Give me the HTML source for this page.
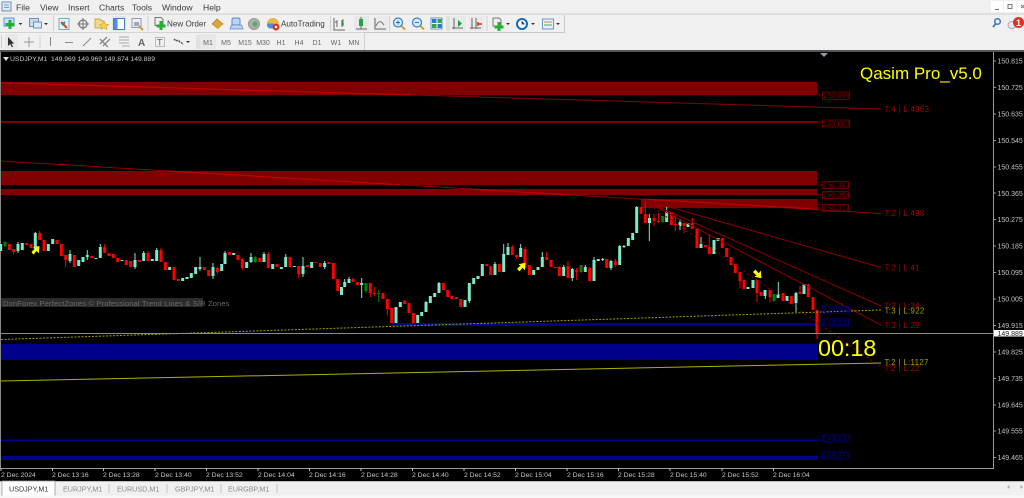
<!DOCTYPE html>
<html><head><meta charset="utf-8"><style>
html,body{margin:0;padding:0;background:#f0f0f0;width:1024px;height:498px;overflow:hidden}
svg{display:block}
text{font-family:"Liberation Sans",sans-serif;white-space:pre}
.m{font-size:8.6px;fill:#3a3a3a}
.tb{font-size:8.1px;fill:#3c3c3c}
.tf{font-size:7px;fill:#666;text-anchor:middle}
.ax{font-size:7px;fill:#c4c4c4}
.tm{font-size:6.8px;fill:#c4c4c4}
.tab{font-size:7.2px;fill:#888}
.lb{font-size:7.2px;fill:#800000;letter-spacing:.15px}
.lr{font-size:7.8px;fill:#a80000;letter-spacing:.35px}
.ly{font-size:7.8px;fill:#a0a000;letter-spacing:.35px}
.lbb{font-size:7.2px;fill:#000080;letter-spacing:.15px}
</style></head><body>
<svg width="1024" height="498" viewBox="0 0 1024 498" xmlns="http://www.w3.org/2000/svg">
<rect width="1024" height="498" fill="#f0f0f0"/>
<!-- menu -->
<rect x="2" y="2" width="9" height="9" fill="#dfe8f4" stroke="#6a8fc0"/>
<path d="M4 5h5M4 7.5h5" stroke="#7a9ac8"/>
<text class="m" x="16" y="10.5">File</text>
<text class="m" x="40" y="10.5">View</text>
<text class="m" x="68" y="10.5">Insert</text>
<text class="m" x="99" y="10.5">Charts</text>
<text class="m" x="132" y="10.5">Tools</text>
<text class="m" x="162" y="10.5">Window</text>
<text class="m" x="203" y="10.5">Help</text>
<rect x="0" y="13.5" width="1024" height="1.2" fill="#d4d4d4"/>
<rect x="991" y="1" width="12" height="11" fill="#fff"/><rect x="1004" y="1" width="12" height="11" fill="#fff"/><rect x="1017" y="1" width="7" height="11" fill="#fff"/>
<path d="M995 9.5h4" stroke="#777"/><rect x="1008" y="4.5" width="4" height="4" fill="none" stroke="#777"/><path d="M1021 5l3 3m0-3l-3 3" stroke="#777"/>
<!-- toolbar borders -->
<path d="M0 32.5H564.5V15" stroke="#c8c8c8" fill="none"/>
<rect x="0" y="32" width="364" height="1" fill="#d4d4d4"/>
<rect x="364" y="33" width="1" height="17" fill="#d0d0d0"/>
<!-- row 1 icons -->
<rect x="4" y="18" width="10" height="8" fill="#cfe0f5" stroke="#5a90d8"/>
<path d="M10 20v9M5.500 24.500h9" stroke="#22b030" stroke-width="3"/>
<path d="M18.500 23h4l-2 2z" fill="#333"/>
<rect x="29.500" y="18.500" width="9" height="8" fill="#c9d9ee" stroke="#6a90c0"/>
<rect x="33.500" y="22" width="8" height="6" fill="#dde8f5" stroke="#6a90c0"/>
<path d="M44 23h4l-2 2z" fill="#333"/>
<path d="M53.500 16v15M148 16v15M330.500 16v15M389.500 16v15M447 16v15M449 16v15M487 16v15" stroke="#d0d0d0"/>
<rect x="59" y="18.500" width="10" height="11" fill="#e8f2fa" stroke="#7ab"/><path d="M61 22l6 6" stroke="#e04030" stroke-width="2"/><path d="M62 25l3-3" stroke="#20a050" stroke-width="2"/>
<circle cx="83" cy="24" r="4" fill="none" stroke="#777" stroke-width="1.300"/><path d="M83 18v12M77 24h12" stroke="#777"/>
<path d="M95 19h5l2 2h2v7H95z" fill="#f0d890" stroke="#c8a850"/><path d="M104 21l1.500 3 3 .5-2.200 2 .6 3-2.900-1.500-2.900 1.500.6-3-2.200-2 3-.5z" fill="#f4d24a" stroke="#c8a030" stroke-width=".6"/>
<rect x="112" y="16" width="14" height="15" fill="#e4e4e4"/>
<rect x="113.500" y="18.500" width="11" height="11" fill="#fff" stroke="#4a80c0"/><rect x="114" y="19" width="3.500" height="10" fill="#4a90d8"/>
<rect x="132" y="18.500" width="9" height="9" fill="#eef" stroke="#99a"/><path d="M134 22h5v4h-5z" fill="#9ab"/><path d="M139 26l4 4" stroke="#c8a030" stroke-width="2"/>
<path d="M155 17.500h6l2 2v6h-8z" fill="#eee" stroke="#777"/>
<path d="M161 21v9M156.500 26h9" stroke="#22b030" stroke-width="3"/>
<text class="tb" x="167" y="26.500">New Order</text>
<path d="M212 24l5-5 6 5-5 4z" fill="#d9a93a" stroke="#a87a20" stroke-width=".7"/><path d="M214 26l4 3 4-4" stroke="#e8c870" fill="none"/>
<rect x="232" y="18" width="8" height="7" rx="1.500" fill="#bcd4f2" stroke="#5a88c8"/><path d="M230 29h13l-1.500-4h-10z" fill="#bcd4f2" stroke="#5a88c8" stroke-width=".8"/>
<circle cx="254" cy="24" r="5.500" fill="#aab0aa" stroke="#999"/><circle cx="255" cy="24" r="2.500" fill="#5ca868"/>
<path d="M267 23.500a6 5.500 0 0 1 12 0z" fill="#e8b840"/><path d="M267 23.500h7v5h-4a4 4 0 0 1-3-5z" fill="#4a90d8"/><circle cx="276" cy="27" r="3.500" fill="#e03020"/><circle cx="276" cy="27" r="1.300" fill="#fff"/>
<text class="tb" x="281" y="26.500">AutoTrading</text>
<g stroke="#666" fill="none"><path d="M334 18v12h11M337 20v7M337 22h-2M342 20v7M342 24h2" stroke-width="1"/></g>
<path d="M343 19v7M341 24h2" stroke="#3a9a50"/>
<rect x="354" y="16" width="15" height="15" fill="#e8e8e8"/>
<path d="M356 29h11M361 17v12" stroke="#666"/><rect x="359" y="19" width="4" height="7" fill="#22a840"/>
<rect x="373" y="16" width="15" height="15" fill="#ebebeb"/>
<path d="M375 18v11h11" stroke="#666" fill="none"/><path d="M376 26c2-5 5-6 8-1" stroke="#777" fill="none"/>
<circle cx="398" cy="22.500" r="4.500" fill="#d4ecfa" stroke="#3a80c8" stroke-width="1.200"/><path d="M396 22.500h4M398 20.500v4" stroke="#2a70b8"/><path d="M401.500 26l3.500 3.500" stroke="#d0a030" stroke-width="2"/>
<circle cx="417" cy="22.500" r="4.500" fill="#d4ecfa" stroke="#3a80c8" stroke-width="1.200"/><path d="M415 22.500h4" stroke="#2a70b8"/><path d="M420.500 26l3.500 3.500" stroke="#d0a030" stroke-width="2"/>
<rect x="431" y="18" width="11" height="11" fill="#fff" stroke="#6a90b8"/><rect x="432" y="19" width="4.500" height="4" fill="#2a78d0"/><rect x="437.500" y="19" width="4" height="4" fill="#2fa84a"/><rect x="432" y="24" width="4.500" height="4" fill="#2fa84a"/><rect x="437.500" y="24" width="4" height="4" fill="#2a78d0"/>
<rect x="451" y="16" width="15" height="15" fill="#e9e9e9"/><rect x="469" y="16" width="15" height="15" fill="#e9e9e9"/>
<path d="M454 18v11M452 28h11" stroke="#666"/><path d="M458 20v7l4-3.500z" fill="#1aa040"/>
<path d="M472 18v11M476 18v11M470 28h11" stroke="#666"/><path d="M482 24h-4M478 22v4" stroke="#d03020" stroke-width="1.500"/>
<path d="M493 18h6l2 2v6h-8z" fill="#eee" stroke="#777"/><path d="M499 22v9M494.500 27h9" stroke="#22b030" stroke-width="3"/>
<path d="M506 23h4l-2 2z" fill="#333"/>
<circle cx="522" cy="24" r="5" fill="#fff" stroke="#1a68b0" stroke-width="2"/><path d="M522 21v3h2.500" stroke="#1a68b0"/>
<path d="M531 23h4l-2 2z" fill="#333"/>
<rect x="542.500" y="19" width="11" height="10" fill="#e8f0f8" stroke="#6a98c8"/><path d="M544 22h8" stroke="#e08040"/><path d="M544 25h8" stroke="#50a860"/>
<path d="M556 23h4l-2 2z" fill="#333"/>
<!-- right icons -->
<circle cx="997.500" cy="21.500" r="2.800" fill="none" stroke="#3a78c0" stroke-width="1.500"/><path d="M995.500 24l-2.500 3" stroke="#3a78c0" stroke-width="1.800"/>
<ellipse cx="1012" cy="25" rx="4" ry="3.500" fill="#e8e8e8" stroke="#aaa"/>
<circle cx="1018.500" cy="22.500" r="5.500" fill="#e03020"/><text x="1018.500" y="26" font-size="9" font-weight="bold" fill="#fff" text-anchor="middle">1</text>
<!-- row 2 -->
<path d="M1.500 35v13" stroke="#ccc"/>
<rect x="5" y="34" width="13" height="15" fill="#e8e8e8"/>
<path d="M8 37v9l2.200-2 1.600 3.200 1.200-.6-1.500-3 2.700-.1z" fill="#333"/>
<path d="M29 37v10M24 42h10" stroke="#999"/>
<path d="M40 35v13M197 35v14M199 35v14" stroke="#d0d0d0"/>
<path d="M50.500 37v9" stroke="#888"/>
<path d="M65 42.500h8" stroke="#888"/>
<path d="M83 46l8-8" stroke="#888"/>
<path d="M100 44l7-7M103 46l7-7M100 39l8 8" stroke="#888" stroke-width="1.400"/>
<path d="M119 37h10M119 40h10M119 43h10M122 46h8" stroke="#aaa"/>
<text x="138" y="46" font-size="10" font-weight="bold" fill="#666">A</text>
<rect x="155.500" y="37.500" width="9" height="9" fill="none" stroke="#bbb"/><text x="157" y="45.500" font-size="9" fill="#666">T</text>
<path d="M174 39l2 2 2-1 2 2 2 1 1 2" stroke="#555" stroke-width="1.500" fill="none" stroke-dasharray="2 1"/>
<path d="M186 41h4l-2 2z" fill="#333"/>
<rect x="200" y="34" width="16" height="15" fill="#e8e8e8"/>
<text class="tf" x="208" y="45">M1</text><text class="tf" x="226" y="45">M5</text><text class="tf" x="245" y="45">M15</text><text class="tf" x="263" y="45">M30</text><text class="tf" x="281" y="45">H1</text><text class="tf" x="299" y="45">H4</text><text class="tf" x="317" y="45">D1</text><text class="tf" x="336" y="45">W1</text><text class="tf" x="354" y="45">MN</text>
<!-- chart area -->
<rect x="0" y="50" width="1024" height="2.500" fill="#555"/>
<rect x="0" y="52" width="1024" height="429" fill="#000"/>
<rect x="0" y="52" width="1" height="416" fill="#888"/>
<rect x="993" y="52" width="1" height="417" fill="#999"/>
<rect x="0" y="468" width="994" height="1" fill="#999"/>
<path d="M820 53h8l-4 4z" fill="#8a9cb4"/>
<path d="M3 57h6l-3 4z" fill="#ddd"/>
<text class="ax" x="10" y="61" xml:space="preserve" style="font-size:6.8px">USDJPY,M1  149.969 149.969 149.874 149.889</text>
<!-- zones -->
<g fill="#800000">
<rect x="1" y="82" width="816" height="13"/>
<rect x="1" y="121" width="816" height="2"/>
<rect x="1" y="171" width="816" height="14"/>
<rect x="1" y="189" width="816" height="6"/>
<rect x="641" y="199" width="176" height="9"/>
</g>
<g fill="#00008b">
<rect x="392" y="323" width="425" height="3"/>
<rect x="1" y="344" width="816" height="16"/>
<rect x="1" y="439.500" width="816" height="1.500"/>
<rect x="1" y="456" width="816" height="4"/>
</g>
<!-- watermark -->
<rect x="1" y="298" width="202" height="9" fill="#2b2b2b"/>
<text x="3" y="306" font-size="7.500" fill="#6a6a6a" letter-spacing=".17">DonForex PerfectZones © Professional Trend Lines &amp; S/R Zones</text>
<!-- wicks -->
<g fill="none" stroke-width="1">
<path stroke="#7fe8c8" d="M18 242v11M35.300 232v3M70 250v13M87.300 250v10M100.300 244v5M135 253v16M143.700 251v2M156.700 248v3M200 257v14M213 263v16M225 251v3M251 253v10M264 252v4M285.700 254v4M303 257v20M324.700 261v8M344.700 279v5M349 277v3M361.700 278v20M426 301v2M439 282v2M469.300 283v20M495 262v4M503.700 244v12M508 243v5M520.700 244v6M542.300 252v6M563.700 265v3M572.300 268v13M585.300 265v3M594 257v4M602.700 258v3M611 260v10M619.700 245v2M624 245v3M636.700 206v2M649.300 214v27M666.700 206v8M680 220v10M701 237v9M778.300 282v13M796 292v20M765.300 290v9"/>
<path stroke="#f00" d="M13.700 249v5M39.700 231v3M65.700 255v12M74.300 255v3M104.700 244v4M130.700 261v4M148 253v-2M161 248v3M217.300 267v7M242.300 258v12M268.300 254v-2M298.700 266v12M333.300 263v15M353 278v2M370.300 283v14M374.300 287v9M383 293v2M387.300 299v16M404.700 300v3M460.700 299v3M512.300 247v-2M525 249v-2M516.700 255v4M546.700 252v6M559.300 267v-1M568 261v5M576.700 268v12M589.700 268v-1M615.300 259v8M645.300 214v-14M654 214v12M658.300 213v10M675.300 214v17M684 223v10M692.300 218v6M709.300 234v14M740 272v16M757 280v22M770 290v12M800 286v7M817 333v6M791.300 296v7M783 293v8"/>
<path stroke="#008000" d="M5 241v6M255.300 256v7M366 283v10M378.700 290v12M581 265v8M662.700 216v7M774 294v8"/>
</g>
<!-- bodies -->
<g fill="none" stroke-width="3">
<path stroke="#7fe8c8" d="M.7 244V251M18 244V251M22.300 243V250M35.300 233V249M48.300 244V251M52.700 239V244M70 254V261M78.700 260V266M83 257V262M87.300 255V257M96 258V259M100.300 247V258M122 260V261M135 260V267M143.700 253V261M152.300 259V261M156.700 250V261M169.700 267V270M182.700 278V281M187 277V279M191.300 273V278M195.700 267V274M200 267V269M213 267V276M221.700 264V271M225 253V264M233.700 253V255M246.700 262V268M251 257V262M264 254V262M272.700 264V269M281.300 267V269M285.700 257V267M294.300 266V267M303 266V274M311.700 262V268M324.700 263V267M341.500 287V295M344.700 282V287M349 279V283M361.700 283V285M396 307V323M400.300 302V307M417.700 315V323M421.700 312V316M426 302V312M430.300 296V303M434.700 293V297M439 283V293M465 300V307M469.300 283V301M473.700 278V284M478 276V279M482.300 264V276M495 264V275M503.700 254V272M508 247V255M520.700 248V257M533.700 270V275M538 267V270M542.300 257V267M563.700 267V276M572.300 269V278M585.300 267V272M594 260V281M598.300 259V261M602.700 259V260M611 261V268M619.700 246V265M624 246V247M628.300 238V246M632.700 233V240M636.700 207V233M649.500 218V223M666.700 212V222M680 222V226M688 223V227M701 244V248M714 240V254M718 238V241M748 287V289M753 280V288M765 290V296M778 294V298M787 296V301M796 293V303M804 284V294"/>
<path stroke="#f00" d="M9.300 244V250M13.700 249V252M26.700 243V245M31 244V248M39.700 233V240M44 240V251M57 240V244M61.300 244V256M65.700 255V260M74.300 255V267M91.700 256V258M104.700 247V253M109 253V256M113.300 254V258M117.700 258V262M126.300 260V265M130.700 261V267M139.300 260V262M148 253V261M161 250V262M165.300 262V270M174 267V280M178.300 279V281M204.300 267V270M208.700 270V276M217.300 268V272M229.300 252V255M238 255V260M242.300 259V268M259.700 258V262M268.300 254V268M277 264V267M290 257V267M298.700 266V274M307.300 265V267M316 262V263M320.300 263V267M329 262V264M333.300 263V279M337.700 279V291M353 279V282M357.300 282V285M370.300 283V293M374.300 293V294M383 293V299M387.300 299V309M391.700 308V323M404.700 301V304M409 303V313M413.300 313V323M443.300 283V290M447.700 290V297M452 296V299M456.300 297V299M460.700 299V307M486.700 264V266M490.700 266V275M499.300 264V272M512.300 247V255M516.700 255V257M525 249V268M529.300 265V275M546.700 257V260M551 260V267M555.300 267V268M559.300 267V276M568 266V278M576.700 270V272M589.700 268V281M606.700 259V268M615.300 261V265M641 207V214M645.300 214V223M654 218V221M658.300 221V222M671.300 212V225M675.300 224V225M684 223V226M692.300 223V229M697 228V248M705.300 245V247M709.300 247V254M722.300 238V248M726.700 248V257M731 257V265M735.300 264V273M740 272V281M744 280V289M757 280V293M761 292V296M770 290V297M783 293V301M791.300 296V304M800 292V294M808.300 284V297M813 297V310M817 310V333"/>
<path stroke="#008000" d="M5 242V246M255.300 257V262M366 283V291M378.700 293V294M581 265V272M662.700 216V222M774 294V301"/>
</g>
<!-- trend lines -->
<g fill="none">
<path d="M1 82.700L881 109" stroke="#8b0000" stroke-width="1"/>
<path d="M1 82.700L410 95" stroke="#c80000" stroke-width="1"/>
<path d="M1 161L881 213.500" stroke="#8b0000" stroke-width="1"/>
<path d="M168 171L400 184.800M470 189L570 195M641 199L817 209" stroke="#c80000" stroke-width="1"/>
<path d="M641 199L881 267.500" stroke="#8b0000" stroke-width="1"/>
<path d="M641 199L881 306" stroke="#8b0000" stroke-width="1"/>
<path d="M641 199L881 325" stroke="#8b0000" stroke-width="1"/>
<path d="M641 199L881 367" stroke="#8b0000" stroke-width="1" stroke-dasharray="2 3"/>
<path d="M1 339.500L881 310" stroke="#a0a000" stroke-width="1" stroke-dasharray="2 1.500"/>
<path d="M1 381L881 363" stroke="#b0b000" stroke-width="1"/>
<path d="M1 333.500H993" stroke="#8c8c8c" stroke-width="1"/>
</g>
<!-- arrows -->
<path d="M32 252l4-4-2.500-.5L39 246.500l-.5 6-1.800-2.200-3.200 3.700z" fill="#ff0" stroke="#ff0" stroke-width=".8"/>
<path d="M517.500 269l4-4-2.500-.5 6-1.200-.5 6-1.800-2.200-3.200 3.700z" fill="#ff0" stroke="#ff0" stroke-width=".8"/>
<path d="M753.500 272l4 4-2.500.5 6 1.200-.5-6-1.800 2.200-3.200-3.700z" fill="#ff0" stroke="#ff0" stroke-width=".8"/>
<!-- zone price boxes -->
<g fill="none" stroke="#800000" stroke-width=".8">
<rect x="822.500" y="92" width="27" height="7.500"/><path d="M817 95h5.500"/>
<rect x="822.500" y="120" width="27" height="7"/><path d="M817 122h5.500"/>
<rect x="822.500" y="181.500" width="26" height="7"/><path d="M817 185h5.500"/>
<rect x="822.500" y="191.500" width="26" height="7"/><path d="M817 195h5.500"/>
<rect x="822.500" y="204.500" width="26" height="7"/><path d="M817 208h5.500"/>
</g>
<g fill="none" stroke="#000080" stroke-width=".8">
<rect x="822.500" y="306" width="26" height="7"/>
<rect x="822.500" y="319" width="26" height="7"/><path d="M817 324h5.500"/>
<rect x="822.500" y="435" width="27" height="7"/><path d="M817 440h5.500"/>
<rect x="822.500" y="452" width="27" height="7"/><path d="M817 457h5.500"/>
</g>
<text class="lb" x="823" y="98">150.699</text>
<text class="lb" x="823" y="126">150.603</text>
<text class="lb" x="823" y="187.500">150.391</text>
<text class="lb" x="823" y="197.500">150.359</text>
<text class="lb" x="823" y="210.500">150.314</text>
<text class="lbb" x="823" y="312">149.969</text>
<text class="lbb" x="823" y="325">149.922</text>
<text class="lbb" x="823" y="441">149.527</text>
<text class="lbb" x="823" y="458">149.471</text>
<!-- T labels -->
<text class="lr" x="884.500" y="112">T:4 | L:4963</text>
<text class="lr" x="884.500" y="216">T:2 | L:498</text>
<text class="lr" x="884.500" y="270.500">T:2 | L:41</text>
<text class="lr" x="884.500" y="308.500">T:2 | L:34</text>
<text class="ly" x="884.500" y="313.500">T:3 | L:922</text>
<text class="lr" x="884.500" y="328">T:3 | L:29</text>
<text class="ly" x="884.500" y="365">T:2 | L:1127</text>
<text class="lr" x="884.500" y="371">T:2 | L:22</text>
<!-- big text -->
<text x="860" y="79" font-size="17" fill="#ffff00">Qasim Pro_v5.0</text>
<text x="818" y="356" font-size="23.300" fill="#ffff00">00:18</text>
<!-- y axis -->
<path d="M993 61h3M993 87.400h3M993 114h3M993 140.500h3M993 167h3M993 193h3M993 219.500h3M993 246h3M993 272.500h3M993 299h3M993 325.500h3M993 352h3M993 378.500h3M993 405h3M993 431h3M993 457.500h3" stroke="#999"/>
<g class="ax">
<text class="ax" x="997.500" y="63.500">150.815</text>
<text class="ax" x="997.500" y="90">150.725</text>
<text class="ax" x="997.500" y="116.500">150.635</text>
<text class="ax" x="997.500" y="143">150.545</text>
<text class="ax" x="997.500" y="169.500">150.455</text>
<text class="ax" x="997.500" y="196">150.365</text>
<text class="ax" x="997.500" y="222">150.275</text>
<text class="ax" x="997.500" y="248.500">150.185</text>
<text class="ax" x="997.500" y="275">150.095</text>
<text class="ax" x="997.500" y="301.500">150.005</text>
<text class="ax" x="997.500" y="328">149.915</text>
<text class="ax" x="997.500" y="354.500">149.825</text>
<text class="ax" x="997.500" y="381">149.735</text>
<text class="ax" x="997.500" y="407.500">149.645</text>
<text class="ax" x="997.500" y="433.500">149.555</text>
<text class="ax" x="997.500" y="460">149.465</text>
</g>
<rect x="994" y="330" width="30" height="6.500" fill="#fff"/>
<text x="997.500" y="336" font-size="7" fill="#222">149.889</text>
<!-- x axis -->
<path d="M1 468v3M52.500 468v3M103.500 468v3M155 468v3M206.500 468v3M258 468v3M309.500 468v3M361 468v3M412.500 468v3M464 468v3M515.500 468v3M567 468v3M618.500 468v3M670 468v3M722 468v3M773.500 468v3" stroke="#bbb"/>
<text class="tm" x="1" y="477">2 Dec 2024</text>
<text class="tm" x="52" y="477">2 Dec 13:16</text>
<text class="tm" x="103" y="477">2 Dec 13:28</text>
<text class="tm" x="155" y="477">2 Dec 13:40</text>
<text class="tm" x="206" y="477">2 Dec 13:52</text>
<text class="tm" x="258" y="477">2 Dec 14:04</text>
<text class="tm" x="309" y="477">2 Dec 14:16</text>
<text class="tm" x="361" y="477">2 Dec 14:28</text>
<text class="tm" x="412" y="477">2 Dec 14:40</text>
<text class="tm" x="464" y="477">2 Dec 14:52</text>
<text class="tm" x="515" y="477">2 Dec 15:04</text>
<text class="tm" x="567" y="477">2 Dec 15:16</text>
<text class="tm" x="618" y="477">2 Dec 15:28</text>
<text class="tm" x="670" y="477">2 Dec 15:40</text>
<text class="tm" x="722" y="477">2 Dec 15:52</text>
<text class="tm" x="773" y="477">2 Dec 16:04</text>
<!-- tabs -->
<rect x="0" y="481" width="1024" height="1" fill="#bbb"/>
<rect x="2" y="481" width="53" height="15" fill="#fff" stroke="#999" stroke-width=".8"/>
<text class="tab" x="9" y="491.500" style="fill:#333">USDJPY,M1</text>
<text class="tab" x="63" y="491.500">EURJPY,M1</text>
<text class="tab" x="117" y="491.500">EURUSD,M1</text>
<text class="tab" x="175" y="491.500">GBPJPY,M1</text>
<text class="tab" x="228" y="491.500">EURGBP,M1</text>
<path d="M109 484v9M167 484v9M221 484v9M277 484v9" stroke="#c4c4c4"/>
<path d="M1009.500 485v4l-2.500-2zM1020.500 485v4l2.500-2z" fill="#aaa"/>
<rect x="0" y="495.500" width="1024" height="2.500" fill="#f8f8f8"/>
</svg>
</body></html>
